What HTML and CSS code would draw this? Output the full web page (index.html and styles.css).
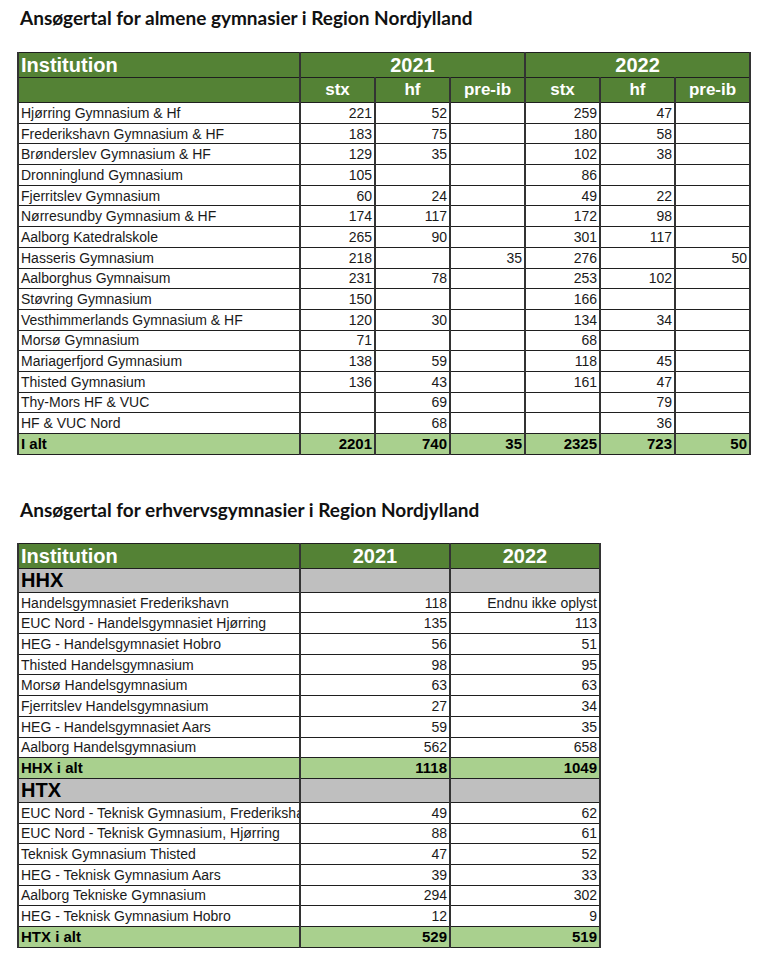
FILE: index.html
```html
<!DOCTYPE html>
<html lang="da">
<head>
<meta charset="utf-8">
<link rel="stylesheet" href="styles.css">
</head>
<body>
<h1 class="title">Ansøgertal for almene gymnasier i Region Nordjylland</h1>
<table class="sheet sheet-a">
  <colgroup>
    <col class="c-inst"><col class="c-num"><col class="c-num"><col class="c-num"><col class="c-num"><col class="c-num"><col class="c-num">
  </colgroup>
  <tr class="hd1"><td class="inst">Institution</td><td colspan="3" class="yr">2021</td><td colspan="3" class="yr">2022</td></tr>
  <tr class="hd2"><td></td><td>stx</td><td>hf</td><td>pre-ib</td><td>stx</td><td>hf</td><td>pre-ib</td></tr>
  <tr><td>Hjørring Gymnasium &amp; Hf</td><td>221</td><td>52</td><td></td><td>259</td><td>47</td><td></td></tr>
  <tr><td>Frederikshavn Gymnasium &amp; HF</td><td>183</td><td>75</td><td></td><td>180</td><td>58</td><td></td></tr>
  <tr><td>Brønderslev Gymnasium &amp; HF</td><td>129</td><td>35</td><td></td><td>102</td><td>38</td><td></td></tr>
  <tr><td>Dronninglund Gymnasium</td><td>105</td><td></td><td></td><td>86</td><td></td><td></td></tr>
  <tr><td>Fjerritslev Gymnasium</td><td>60</td><td>24</td><td></td><td>49</td><td>22</td><td></td></tr>
  <tr><td>Nørresundby Gymnasium &amp; HF</td><td>174</td><td>117</td><td></td><td>172</td><td>98</td><td></td></tr>
  <tr><td>Aalborg Katedralskole</td><td>265</td><td>90</td><td></td><td>301</td><td>117</td><td></td></tr>
  <tr><td>Hasseris Gymnasium</td><td>218</td><td></td><td>35</td><td>276</td><td></td><td>50</td></tr>
  <tr><td>Aalborghus Gymnaisum</td><td>231</td><td>78</td><td></td><td>253</td><td>102</td><td></td></tr>
  <tr><td>Støvring Gymnasium</td><td>150</td><td></td><td></td><td>166</td><td></td><td></td></tr>
  <tr><td>Vesthimmerlands Gymnasium &amp; HF</td><td>120</td><td>30</td><td></td><td>134</td><td>34</td><td></td></tr>
  <tr><td>Morsø Gymnasium</td><td>71</td><td></td><td></td><td>68</td><td></td><td></td></tr>
  <tr><td>Mariagerfjord Gymnasium</td><td>138</td><td>59</td><td></td><td>118</td><td>45</td><td></td></tr>
  <tr><td>Thisted Gymnasium</td><td>136</td><td>43</td><td></td><td>161</td><td>47</td><td></td></tr>
  <tr><td>Thy-Mors HF &amp; VUC</td><td></td><td>69</td><td></td><td></td><td>79</td><td></td></tr>
  <tr><td>HF &amp; VUC Nord</td><td></td><td>68</td><td></td><td></td><td>36</td><td></td></tr>
  <tr class="total"><td>I alt</td><td>2201</td><td>740</td><td>35</td><td>2325</td><td>723</td><td>50</td></tr>
</table>

<h1 class="title title-b">Ansøgertal for erhvervsgymnasier i Region Nordjylland</h1>
<table class="sheet sheet-b">
  <colgroup>
    <col class="c-inst"><col class="c-wide"><col class="c-wide">
  </colgroup>
  <tr class="hd1"><td class="inst">Institution</td><td class="yr">2021</td><td class="yr">2022</td></tr>
  <tr class="group"><td>HHX</td><td></td><td></td></tr>
  <tr><td>Handelsgymnasiet Frederikshavn</td><td>118</td><td>Endnu ikke oplyst</td></tr>
  <tr><td>EUC Nord - Handelsgymnasiet Hjørring</td><td>135</td><td>113</td></tr>
  <tr><td>HEG - Handelsgymnasiet Hobro</td><td>56</td><td>51</td></tr>
  <tr><td>Thisted Handelsgymnasium</td><td>98</td><td>95</td></tr>
  <tr><td>Morsø Handelsgymnasium</td><td>63</td><td>63</td></tr>
  <tr><td>Fjerritslev Handelsgymnasium</td><td>27</td><td>34</td></tr>
  <tr><td>HEG - Handelsgymnasiet Aars</td><td>59</td><td>35</td></tr>
  <tr><td>Aalborg Handelsgymnasium</td><td>562</td><td>658</td></tr>
  <tr class="total"><td>HHX i alt</td><td>1118</td><td>1049</td></tr>
  <tr class="group"><td>HTX</td><td></td><td></td></tr>
  <tr><td>EUC Nord - Teknisk Gymnasium, Frederikshavn</td><td>49</td><td>62</td></tr>
  <tr><td>EUC Nord - Teknisk Gymnasium, Hjørring</td><td>88</td><td>61</td></tr>
  <tr><td>Teknisk Gymnasium Thisted</td><td>47</td><td>52</td></tr>
  <tr><td>HEG - Teknisk Gymnasium Aars</td><td>39</td><td>33</td></tr>
  <tr><td>Aalborg Tekniske Gymnasium</td><td>294</td><td>302</td></tr>
  <tr><td>HEG - Teknisk Gymnasium Hobro</td><td>12</td><td>9</td></tr>
  <tr class="total"><td>HTX i alt</td><td>529</td><td>519</td></tr>
</table>
</body>
</html>
```
FILE: styles.css
```css
html, body {
  margin: 0;
  padding: 0;
  background: #ffffff;
}
body {
  padding: 8px 0 0 17px;
}
.title {
  font-family: Lato, "Open Sans", sans-serif;
  font-weight: 700;
  font-size: 19px;
  line-height: 20px;
  color: #111;
  margin: 0 0 24px 3px;
}
.title-b {
  margin-top: 45px;
  margin-bottom: 23px;
}
.sheet {
  border-collapse: collapse;
  table-layout: fixed;
  font-family: "Liberation Sans", Arial, sans-serif;
  font-size: 14px;
  color: #1a1a1a;
}
.sheet-a { width: 732px; }
.sheet-b { width: 583px; }
.c-inst { width: 282px; }
.sheet-a .c-num { width: 75px; }
.c-wide { width: 150px; }
.sheet td {
  height: 20.7px;
  padding: 0 2px 0 2px;
  border-top: 1px solid #1f1f1f;
  border-bottom: 1px solid #1f1f1f;
  border-left: 2px solid #333;
  border-right: 2px solid #333;
  text-align: right;
  white-space: nowrap;
  overflow: hidden;
  line-height: 16px;
  box-sizing: border-box;
}
.sheet td:first-child {
  text-align: left;
  text-overflow: clip;
}
.hd1 td, .hd2 td {
  background: #548235;
  color: #ffffff;
  font-weight: 700;
  text-align: center;
  height: 25px;
}
.hd1 td {
  font-size: 20px;
}
.hd2 td {
  font-size: 17px;
}
.sheet tr.hd1 td:first-child, .sheet tr.hd2 td:first-child {
  text-align: left;
}
.group td {
  background: #bfbfbf;
  font-weight: 700;
  font-size: 20px;
  height: 24px;
  color: #000;
}
.total td {
  background: #a9d08e;
  font-weight: 700;
  font-size: 15px;
  color: #000;
}
```
